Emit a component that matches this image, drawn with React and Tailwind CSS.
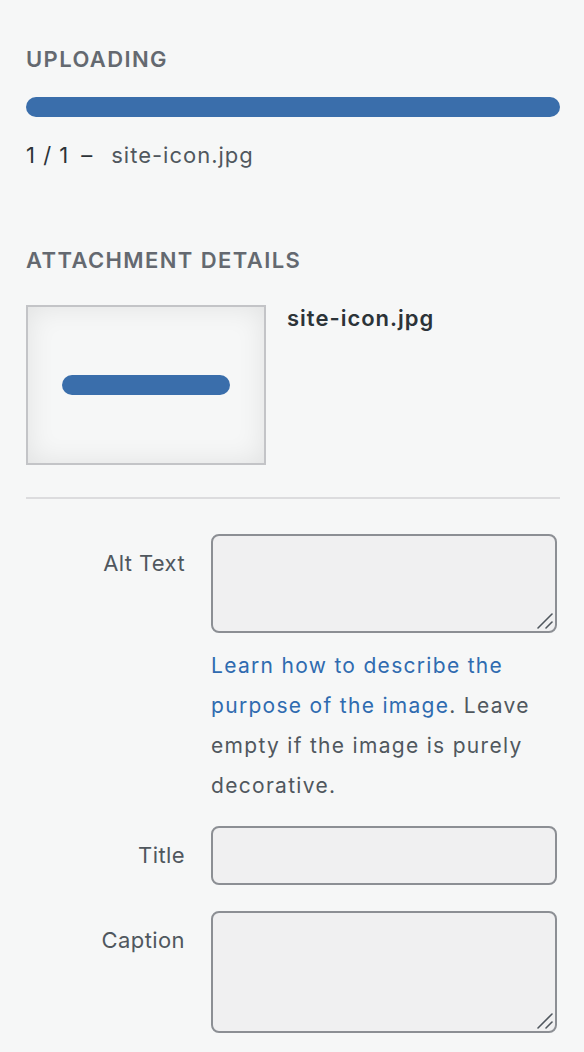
import React from 'react';

const ResizeGrip = () => (
  <svg
    className="absolute right-[3px] bottom-[3px] pointer-events-none"
    width="18"
    height="18"
    viewBox="0 0 18 18"
  >
    <path d="M2 16 L16 2" stroke="#50575e" strokeWidth="1.6" strokeLinecap="round" />
    <path d="M10 16 L16 10" stroke="#50575e" strokeWidth="1.6" strokeLinecap="round" />
  </svg>
);

const Field = ({ label, height, multiline, children }) => (
  <div className="flex items-start">
    <div className="w-[159px] shrink-0 pt-[14px] text-right text-[22px] leading-[31px] tracking-[0.4px] text-[#50575e]">
      {label}
    </div>
    <div className="ml-[26px] w-[346px]">
      <div className="relative">
        {multiline ? (
          <textarea
            className="block w-full resize-none rounded-[8px] border-2 border-[#8c8f94] bg-[#f0f0f1] outline-none"
            style={{ height }}
          />
        ) : (
          <input
            type="text"
            className="block w-full rounded-[8px] border-2 border-[#8c8f94] bg-[#f0f0f1] outline-none"
            style={{ height }}
          />
        )}
        {multiline && <ResizeGrip />}
      </div>
      {children}
    </div>
  </div>
);

export default function App() {
  return (
    <div
      className="min-h-screen bg-[#f6f7f7] pl-[26px] pr-[24px] pt-[44px]"
      style={{ fontFamily: 'Inter, "Noto Sans", sans-serif' }}
    >
      <h2 className="text-[22px] leading-[31px] font-semibold uppercase tracking-[1.4px] text-[#646970]">
        Uploading
      </h2>
      <div className="mt-[22px] h-[20px] w-full rounded-full bg-[#3a6eab]" />
      <div className="mt-[23px] text-[22px] leading-[31px] tracking-[1px] text-[#2c3338]">
        1 / 1<span className="ml-[12px] mr-[18px]">–</span>
        <span className="text-[#50575e]">site-icon.jpg</span>
      </div>

      <h2 className="mt-[74px] text-[22px] leading-[31px] font-semibold uppercase tracking-[1.4px] text-[#646970]">
        Attachment Details
      </h2>
      <div className="mt-[29px] flex items-start">
        <div className="flex h-[160px] w-[240px] shrink-0 items-center justify-center border-2 border-[#c3c4c7] bg-[#f6f7f7] shadow-[inset_0_0_28px_rgba(0,0,0,0.09)]">
          <div className="h-[20px] w-[168px] rounded-full bg-[#3a6eab]" />
        </div>
        <div className="ml-[21px] -mt-[2px] text-[22px] leading-[31px] font-semibold tracking-[1px] text-[#2c3338]">
          site-icon.jpg
        </div>
      </div>

      <div className="mt-[32px] h-[2px] w-full bg-[#dcdcde]" />

      <div className="mt-[35px] flex flex-col gap-[26px] pb-[18px]">
        <Field label="Alt Text" height={99} multiline>
          <p className="mt-[13px] mb-[-6px] text-[21px] leading-[40px] tracking-[1.3px] text-[#50575e]">
            <a href="#" className="text-[#2f6bb0]">
              Learn how to describe the purpose of the image
            </a>
            . Leave empty if the image is purely decorative.
          </p>
        </Field>
        <Field label="Title" height={59} />
        <Field label="Caption" height={122} multiline />
      </div>
    </div>
  );
}
